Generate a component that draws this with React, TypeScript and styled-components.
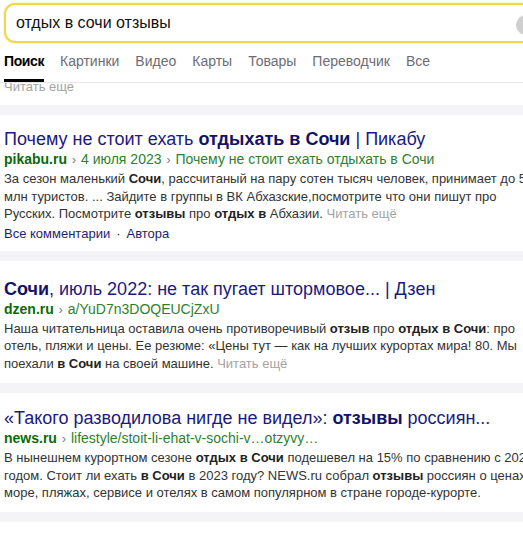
import styled, { createGlobalStyle } from "styled-components";

const GlobalStyle = createGlobalStyle`
  html, body {
    margin: 0;
    padding: 0;
    background: #ffffff;
    overflow: hidden;
  }
  body {
    font-family: "Liberation Sans", Arial, "Noto Sans", sans-serif;
    color: #333;
  }
`;

type Part = string | { b: string };

type Result = {
  title: Part[];
  domain: string;
  path: string[];
  lines: Part[][];
  more?: boolean;
  links?: string[];
  padTop: number;
  padBottom: number;
};

const tabs = ["Поиск", "Картинки", "Видео", "Карты", "Товары", "Переводчик", "Все"];

const results: Result[] = [
  {
    title: ["Почему не стоит ехать ", { b: "отдыхать в Сочи" }, " | Пикабу"],
    domain: "pikabu.ru",
    path: ["4 июля 2023", "Почему не стоит ехать отдыхать в Сочи"],
    lines: [
      ["За сезон маленький ", { b: "Сочи" }, ", рассчитаный на пару сотен тысяч человек, принимает до 5"],
      ["млн туристов. ... Зайдите в группы в ВК Абхазские,посмотрите что они пишут про"],
      ["Русских. Посмотрите ", { b: "отзывы" }, " про ", { b: "отдых в" }, " Абхазии."],
    ],
    more: true,
    links: ["Все комментарии", "Автора"],
    padTop: 13,
    padBottom: 8,
  },
  {
    title: [{ b: "Сочи" }, ", июль 2022: не так пугает штормовое... | Дзен"],
    domain: "dzen.ru",
    path: ["a/YuD7n3DOQEUCjZxU"],
    lines: [
      ["Наша читательница оставила очень противоречивый ", { b: "отзыв" }, " про ", { b: "отдых в Сочи" }, ": про"],
      ["отель, пляжи и цены. Ее резюме: «Цены тут — как на лучших курортах мира! 80. Мы"],
      ["поехали ", { b: "в Сочи" }, " на своей машине."],
    ],
    more: true,
    padTop: 17,
    padBottom: 11,
  },
  {
    title: ["«Такого разводилова нигде не видел»: ", { b: "отзывы" }, " россиян..."],
    domain: "news.ru",
    path: ["lifestyle/stoit-li-ehat-v-sochi-v…otzyvy…"],
    lines: [
      ["В нынешнем курортном сезоне ", { b: "отдых в Сочи" }, " подешевел на 15% по сравнению с 2022"],
      ["годом. Стоит ли ехать ", { b: "в Сочи" }, " в 2023 году? NEWS.ru собрал ", { b: "отзывы" }, " россиян о ценах на"],
      ["море, пляжах, сервисе и отелях в самом популярном в стране городе-курорте."],
    ],
    padTop: 14,
    padBottom: 10,
  },
];

function renderParts(parts: Part[]) {
  return parts.map((p, i) =>
    typeof p === "string" ? <span key={i}>{p}</span> : <b key={i}>{p.b}</b>
  );
}

export default function App() {
  return (
    <>
      <GlobalStyle />
      <Page>
        <Header>
          <SearchBox>
            <Query>отдых в сочи отзывы</Query>
            <ClearButton />
          </SearchBox>
          <Tabs>
            {tabs.map((t, i) => (
              <Tab key={t} $active={i === 0}>
                {t}
              </Tab>
            ))}
          </Tabs>
        </Header>
        <ClippedTail>
          <MoreLink>Читать еще</MoreLink>
        </ClippedTail>
        <Results>
          {results.map((r) => (
            <Card key={r.domain} $padTop={r.padTop} $padBottom={r.padBottom}>
              <Title>{renderParts(r.title)}</Title>
              <Path>
                <Domain>{r.domain}</Domain>
                {r.path.map((p) => (
                  <span key={p}>
                    <Sep>›</Sep>
                    {p}
                  </span>
                ))}
              </Path>
              <Snippet>
                {r.lines.map((line, i) => (
                  <SnippetLine key={i}>
                    {renderParts(line)}
                    {r.more && i === r.lines.length - 1 && <MoreLink> Читать ещё</MoreLink>}
                  </SnippetLine>
                ))}
              </Snippet>
              {r.links && (
                <Links>
                  {r.links.map((l, i) => (
                    <span key={l}>
                      {i > 0 && <Dot>·</Dot>}
                      {l}
                    </span>
                  ))}
                </Links>
              )}
            </Card>
          ))}
          <NextCard />
        </Results>
      </Page>
    </>
  );
}

const Page = styled.div`
  width: 620px;
  display: flex;
  flex-direction: column;
`;

const Header = styled.div`
  padding: 3px 0 0 4px;
  background: #fff;
  border-bottom: 1px solid #e6e6e9;
`;

const SearchBox = styled.div`
  box-sizing: border-box;
  width: 600px;
  height: 40px;
  display: flex;
  align-items: center;
  padding: 0 10px 0 10px;
  border: 2px solid #f3d64d;
  border-radius: 11px;
  background: #fff;
  box-shadow: 0 0 1px 1px rgba(250, 225, 120, 0.35);
`;

const Query = styled.div`
  width: 500px;
  flex: none;
  font-size: 16px;
  color: #111;
  padding-bottom: 1px;
`;

const ClearButton = styled.div`
  flex: none;
  width: 20px;
  height: 20px;
  border-radius: 50%;
  background: #cfcfcf;
  margin-top: 4px;
`;

const Tabs = styled.div`
  display: flex;
  gap: 16px;
`;

const Tab = styled.div<{ $active?: boolean }>`
  box-sizing: border-box;
  height: 39px;
  padding-top: 10px;
  font-size: 14px;
  line-height: 16px;
  color: ${(p) => (p.$active ? "#000" : "#6c6c78")};
  font-weight: ${(p) => (p.$active ? 700 : 400)};
  letter-spacing: ${(p) => (p.$active ? "-0.4px" : "0")};
  border-bottom: 3px solid ${(p) => (p.$active ? "#000" : "transparent")};
`;

const ClippedTail = styled.div`
  height: 22px;
  overflow: hidden;
  padding-left: 4px;
  background: #fff;
  font-size: 13px;
  line-height: 17px;

  & > span {
    display: block;
    margin-top: -5px;
  }
`;

const Results = styled.div`
  display: flex;
  flex-direction: column;
  gap: 10px;
  padding-top: 10px;
  background: #f4f4f6;
`;

const Card = styled.div<{ $padTop: number; $padBottom: number }>`
  background: #fff;
  padding: ${(p) => p.$padTop}px 0 ${(p) => p.$padBottom}px 4px;
`;

const NextCard = styled.div`
  background: #fff;
  height: 40px;
`;

const Title = styled.div`
  font-size: 18px;
  line-height: 22px;
  color: #1b1a80;
  white-space: nowrap;

  b {
    color: #121266;
  }
`;

const Path = styled.div`
  font-size: 14px;
  line-height: 18px;
  color: #2f7f2f;
  white-space: nowrap;
`;

const Domain = styled.b`
  color: #0a6a0a;
`;

const Sep = styled.span`
  color: #777;
  margin: 0 5px 0 5px;
  font-size: 12px;
`;

const Snippet = styled.div`
  margin-top: 1px;
  font-size: 13px;
  line-height: 17.5px;
  color: #333;
  white-space: nowrap;

  b {
    color: #222;
  }
`;

const SnippetLine = styled.div``;

const MoreLink = styled.span`
  color: #a3a3a3;
`;

const Links = styled.div`
  margin-top: 2px;
  font-size: 13px;
  line-height: 18px;
  color: #1e1e6e;
  white-space: nowrap;
`;

const Dot = styled.span`
  margin: 0 6px;
`;
